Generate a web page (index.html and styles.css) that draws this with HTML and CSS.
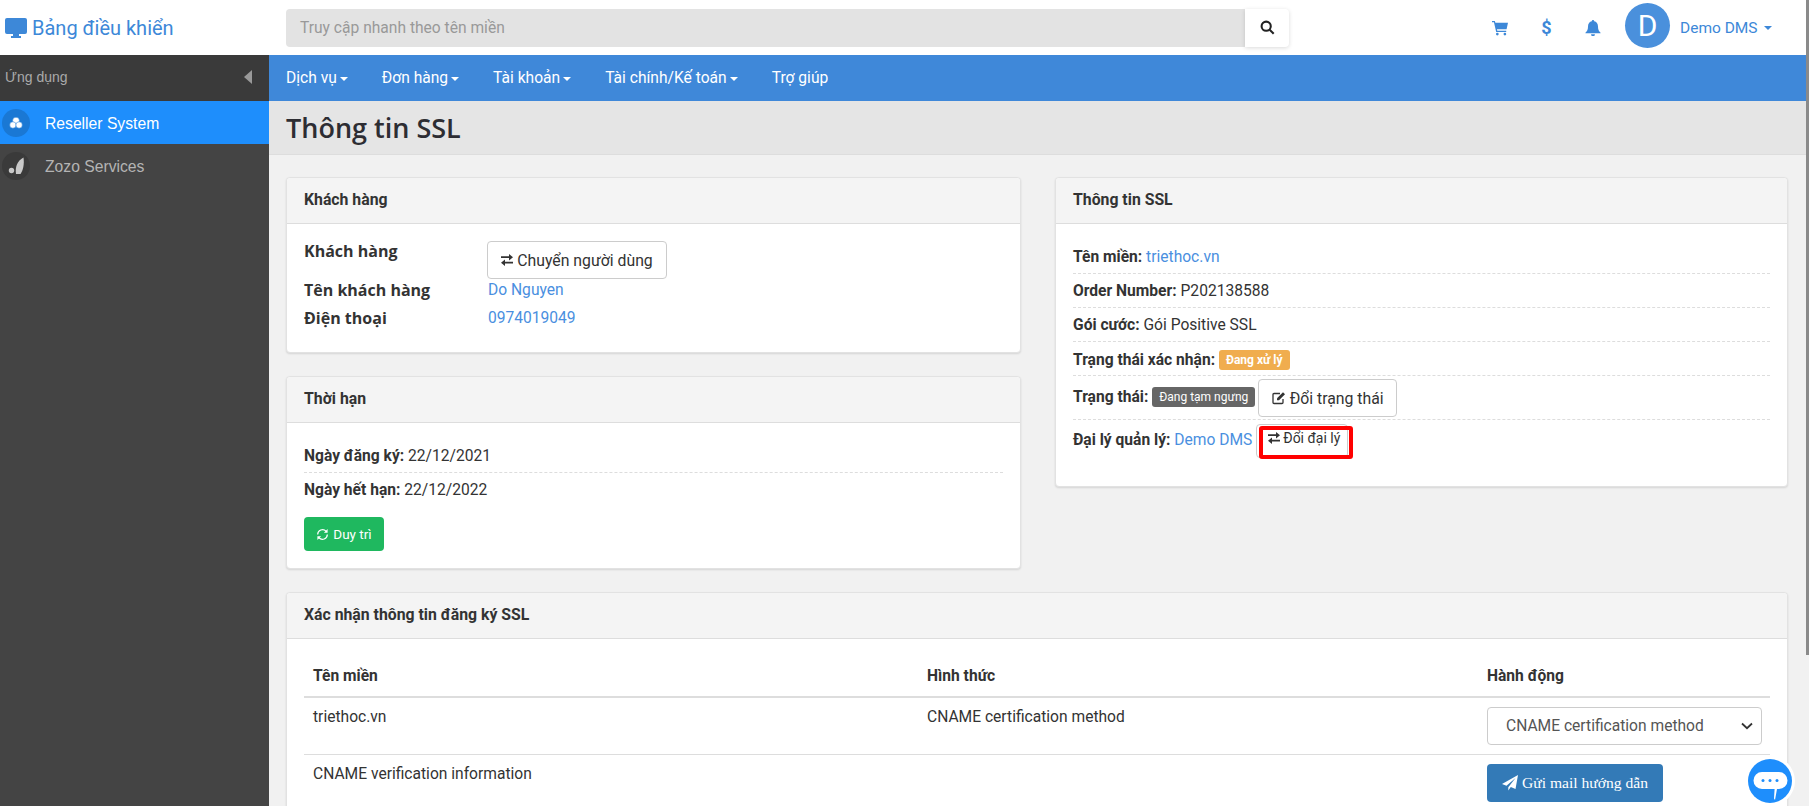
FILE: index.html
```html
<!DOCTYPE html>
<html lang="vi">
<head>
    <meta charset="UTF-8">
    <title>Thông tin SSL</title>
    <link rel="stylesheet" href="styles.css">
</head>
<body>
    <div class="page">
        <!-- Top bar -->
        <header class="topbar">
            <a class="brand">
                <svg class="brand-icon" viewBox="0 0 22 20"><path d="M2 0h18a2 2 0 0 1 2 2v12a2 2 0 0 1-2 2h-6v2h2v2H6v-2h2v-2H2a2 2 0 0 1-2-2V2a2 2 0 0 1 2-2z"/></svg>
                <span>Bảng điều khiển</span>
            </a>
            <div class="search">
                <div class="search-input">Truy cập nhanh theo tên miền</div>
                <div class="search-btn">
                    <svg viewBox="0 0 16 16"><circle cx="6.6" cy="6.6" r="4.9"/><path d="M10.3 10.3 14.6 14.6"/></svg>
                </div>
            </div>
            <div class="top-icons">
                <svg class="top-icon cart" viewBox="0 0 18 18"><path d="M0 1h3.2l.6 2H18l-1.6 7.5H5.6l.3 1.5H16v1.4H4.7L2.2 2.4H0z"/><circle cx="6" cy="15.8" r="1.5"/><circle cx="14.5" cy="15.8" r="1.5"/></svg>
                <span class="dollar">$</span>
                <svg class="top-icon bell" viewBox="0 0 18 18"><path d="M9 0a1.3 1.3 0 0 1 1.3 1.5C13 2 14.600 4.200 14.600 7c0 4 1 5.500 2.900 7.300v.7H.5v-.7C2.400 12.500 3.400 11 3.400 7c0-2.800 1.600-5 4.300-5.500A1.300 1.300 0 0 1 9 0zM6.800 16h4.400a2.200 2.200 0 0 1-4.400 0z"/></svg>
                <div class="avatar">D</div>
                <span class="user">Demo DMS</span>
                <span class="caret user-caret"></span>
            </div>
        </header>

        <div class="body-row">
            <!-- Sidebar -->
            <aside class="sidebar">
                <div class="side-head">
                    <span>Ứng dụng</span>
                    <span class="side-arrow"></span>
                </div>
                <a class="side-item active">
                    <span class="side-circle">
                        <svg class="ic-cloud" viewBox="0 0 14 14"><circle cx="7" cy="4.600" r="3.400"/><circle cx="3.900" cy="9" r="3.200"/><circle cx="10.100" cy="9" r="3.200"/></svg>
                    </span>
                    <span class="side-text">Reseller System</span>
                </a>
                <a class="side-item">
                    <span class="side-circle">
                        <svg class="ic-leaf" viewBox="0 0 18 18"><circle cx="4.500" cy="13.500" r="2.700"/><path d="M9 17C8 10 10 4 16.500 .5c1 7-.5 13-3 16.500z"/></svg>
                    </span>
                    <span class="side-text">Zozo Services</span>
                </a>
            </aside>

            <main class="main">
                <nav class="navbar">
                    <a>Dịch vụ<span class="caret"></span></a>
                    <a>Đơn hàng<span class="caret"></span></a>
                    <a>Tài khoản<span class="caret"></span></a>
                    <a>Tài chính/Kế toán<span class="caret"></span></a>
                    <a>Trợ giúp</a>
                </nav>
                <div class="title-bar"><h1>Thông tin SSL</h1></div>

                <div class="content">
                    <div class="col-grid">
                        <div class="col">
                            <section class="card">
                                <div class="card-head">Khách hàng</div>
                                <div class="card-body customer">
                                    <div class="cust-label">Khách hàng</div>
                                    <div>
                                        <button class="btn btn-user">
                                            <svg class="ic-swap" viewBox="0 0 12 12"><path d="M0 2.300h8V0l4 3.200-4 3.200V4.100H0zM12 7.700H4V5.500L0 8.700l4 3.200V9.500h8z"/></svg>
                                            Chuyển người dùng
                                        </button>
                                    </div>
                                    <div class="cust-label">Tên khách hàng</div>
                                    <div class="link">Do Nguyen</div>
                                    <div class="cust-label">Điện thoại</div>
                                    <div class="link">0974019049</div>
                                </div>
                            </section>

                            <section class="card">
                                <div class="card-head">Thời hạn</div>
                                <div class="card-body">
                                    <div class="info-row first"><b>Ngày đăng ký:</b> 22/12/2021</div>
                                    <div class="info-row last"><b>Ngày hết hạn:</b> 22/12/2022</div>
                                    <button class="btn btn-renew">
                                        <svg class="ic-refresh" viewBox="0 0 14 14"><path d="M1.800 7a5.200 5.200 0 0 1 9-3.500M12.200 7a5.200 5.200 0 0 1-9 3.500"/><path class="tip" d="M12.500 1v4H8.500zM1.500 13V9h4z"/></svg>
                                        Duy trì
                                    </button>
                                </div>
                            </section>
                        </div>

                        <section class="card ssl-card">
                            <div class="card-head">Thông tin SSL</div>
                            <div class="card-body">
                                <div class="info-row first"><b>Tên miền:</b> <span class="link">triethoc.vn</span></div>
                                <div class="info-row"><b>Order Number:</b> P202138588</div>
                                <div class="info-row"><b>Gói cước:</b> Gói Positive SSL</div>
                                <div class="info-row"><b>Trạng thái xác nhận:</b> <span class="badge badge-warn">Đang xử lý</span></div>
                                <div class="info-row status-row">
                                    <b>Trạng thái:</b> <span class="badge badge-dark">Đang tạm ngưng</span>
                                    <button class="btn btn-status">
                                        <svg class="ic-edit" viewBox="0 0 14 14"><path class="frame" d="M11 8v3.500a1 1 0 0 1-1 1H2a1 1 0 0 1-1-1v-8a1 1 0 0 1 1-1h6"/><path class="pen" d="M5 7.200 11 1.200 13 3.200 7 9.200H5z"/></svg>
                                        Đổi trạng thái
                                    </button>
                                </div>
                                <div class="info-row agent-row">
                                    <b>Đại lý quản lý:</b> <span class="link">Demo DMS</span>
                                    <button class="btn btn-agent">
                                        <svg class="ic-swap" viewBox="0 0 12 12"><path d="M0 2.300h8V0l4 3.200-4 3.200V4.100H0zM12 7.700H4V5.500L0 8.700l4 3.200V9.500h8z"/></svg>
                                        Đổi đại lý
                                        <span class="red-mark"></span>
                                    </button>
                                </div>
                            </div>
                        </section>
                    </div>

                    <section class="card">
                        <div class="card-head">Xác nhận thông tin đăng ký SSL</div>
                        <div class="card-body">
                            <table class="verify">
                                <thead>
                                    <tr><th class="c1">Tên miền</th><th class="c2">Hình thức</th><th>Hành động</th></tr>
                                </thead>
                                <tbody>
                                    <tr>
                                        <td>triethoc.vn</td>
                                        <td>CNAME certification method</td>
                                        <td>
                                            <div class="select">
                                                CNAME certification method
                                                <svg viewBox="0 0 12 8"><path d="M1 1.500 6 6.200 11 1.500"/></svg>
                                            </div>
                                        </td>
                                    </tr>
                                    <tr>
                                        <td>CNAME verification information</td>
                                        <td></td>
                                        <td>
                                            <button class="btn btn-mail">
                                                <svg class="ic-plane" viewBox="0 0 16 16"><path d="M16 0 13.500 14 8.800 12 6.300 15.500V12.200L13.500 3 4.500 10.800 0 9z"/></svg>
                                                Gửi mail hướng dẫn
                                            </button>
                                        </td>
                                    </tr>
                                </tbody>
                            </table>
                        </div>
                    </section>
                </div>
            </main>
        </div>
    </div>

    <div class="scrollbar"><div class="scroll-thumb"></div></div>

    <!-- Chat bubble -->
    <div class="chat">
        <svg viewBox="0 0 44 44">
            <circle class="chat-bg" cx="22" cy="22" r="22"/>
            <path class="chat-msg" d="M14 13h17a7.500 7.500 0 0 1 0 17h-2l-2 11-1-1.500 .6-9.500H14a8.500 8.500 0 0 1 0-17z"/>
            <circle class="chat-dot" cx="15" cy="21.500" r="1.500"/>
            <circle class="chat-dot" cx="22" cy="21.500" r="1.500"/>
            <circle class="chat-dot" cx="29" cy="21.500" r="1.500"/>
        </svg>
    </div>
</body>
</html>
```

FILE: styles.css
```css
* {
    box-sizing: border-box;
}

html, body {
    margin: 0;
    height: 100%;
}

body {
    height: 806px;
    overflow: hidden;
    display: flex;
    font-family: Roboto, "Liberation Sans", sans-serif;
    font-size: 15.6px;
    color: #333;
    background-color: #f1f1f1;
}

.page {
    flex: 1;
    min-width: 0;
    display: flex;
    flex-direction: column;
}

.scrollbar {
    width: 3px;
    background-color: #f1f1f1;
}

.scroll-thumb {
    height: 655px;
    background-color: #8a8a8a;
}

/* Top bar */
.topbar {
    height: 55px;
    flex-shrink: 0;
    display: flex;
    align-items: center;
    background-color: #fff;
}

.brand {
    width: 286px;
    padding-left: 5px;
    display: flex;
    align-items: center;
    gap: 5px;
    color: #3d88d8;
    font-size: 20px;
}

.brand-icon {
    width: 22px;
    height: 20px;
    fill: #3d88d8;
}

.search {
    display: flex;
    width: 1003px;
    height: 38px;
}

.search-input {
    flex: 1;
    padding-left: 14px;
    line-height: 38px;
    background-color: #e3e3e3;
    border-radius: 4px 0 0 4px;
    color: #999;
}

.search-btn {
    width: 44px;
    display: flex;
    align-items: center;
    justify-content: center;
    background-color: #fff;
    border-radius: 0 4px 4px 0;
    box-shadow: 0 1px 4px rgba(0, 0, 0, 0.15);
}

.search-btn svg {
    width: 15px;
    height: 15px;
    fill: none;
    stroke: #222;
    stroke-width: 2.2;
}

.top-icons {
    flex: 1;
    display: flex;
    align-items: center;
    padding-left: 203px;
    color: #3d88d8;
}

.top-icon {
    fill: #3d88d8;
}

.cart {
    width: 16px;
    height: 16px;
}

.dollar {
    width: 11px;
    margin-left: 33px;
    font-size: 18px;
    font-weight: 700;
    text-align: center;
}

.bell {
    width: 16px;
    height: 16px;
    margin-left: 33px;
}

.avatar {
    width: 45px;
    height: 45px;
    margin-left: 24px;
    margin-bottom: 4px;
    border-radius: 50%;
    background-color: #4a90dc;
    color: #fff;
    font-size: 30px;
    line-height: 45px;
    text-align: center;
}

.user {
    margin-left: 10px;
    font-size: 15.5px;
}

.caret {
    display: inline-block;
    margin-left: 3px;
    vertical-align: middle;
    border-top: 4px solid currentColor;
    border-left: 4px solid transparent;
    border-right: 4px solid transparent;
}

.user-caret {
    margin-left: 6px;
}

/* Sidebar */
.body-row {
    flex: 1;
    min-height: 0;
    display: flex;
}

.sidebar {
    width: 269px;
    flex-shrink: 0;
    background-color: #444;
    font-family: "Liberation Sans", Arial, sans-serif;
}

.side-head {
    height: 46px;
    padding: 0 17px 2px 5px;
    display: flex;
    align-items: center;
    justify-content: space-between;
    background-color: #3a3a3a;
    color: #aaa;
    font-size: 14px;
}

.side-arrow {
    border-right: 8px solid #999;
    border-top: 7px solid transparent;
    border-bottom: 7px solid transparent;
}

.side-item {
    height: 43px;
    padding-left: 2px;
    display: flex;
    align-items: center;
    gap: 15px;
    color: #b4b4b4;
    font-size: 15.7px;
}

.side-text {
    padding-top: 2px;
}

.side-item.active {
    background-color: #1e8efc;
    color: #fff;
}

.side-circle {
    width: 28px;
    height: 28px;
    display: flex;
    align-items: center;
    justify-content: center;
    border-radius: 50%;
    background-color: #3a3a3a;
}

.side-item.active .side-circle {
    background-color: #1a78d4;
}

.ic-leaf {
    width: 18px;
    height: 18px;
    fill: #c8c8c8;
}

.ic-cloud {
    width: 14px;
    height: 14px;
    fill: #fff;
    stroke: #1a78d4;
    stroke-width: 0.5;
}

/* Main */
.main {
    flex: 1;
    min-width: 0;
}

.navbar {
    height: 46px;
    padding-left: 17px;
    display: flex;
    align-items: center;
    gap: 34px;
    background-color: #3f88d9;
    color: #fff;
}

.title-bar {
    height: 54px;
    padding-left: 17px;
    display: flex;
    align-items: center;
    background-color: #e5e5e5;
    border-bottom: 1px solid #ddd;
}

.title-bar h1 {
    margin: 0;
    font-family: "Open Sans", sans-serif;
    font-size: 27px;
    font-weight: 600;
    color: #2d2d33;
}

.content {
    padding: 22px 18px 0 17px;
    display: flex;
    flex-direction: column;
    gap: 23px;
}

.col-grid {
    display: grid;
    grid-template-columns: 735px 733px;
    gap: 34px;
    align-items: start;
}

.col {
    display: flex;
    flex-direction: column;
    gap: 23px;
}

.card {
    background-color: #fff;
    border: 1px solid #e2e2e2;
    border-radius: 4px;
    box-shadow: 0 1px 2px rgba(0, 0, 0, 0.12);
}

.card-head {
    height: 46px;
    padding-left: 17px;
    line-height: 44px;
    background-color: #f4f4f4;
    border-bottom: 1px solid #ddd;
    border-radius: 4px 4px 0 0;
    font-weight: 700;
    font-size: 15.8px;
}

.card-body {
    padding: 17px;
}

.link {
    color: #4a8fe0;
}

.btn {
    border: 1px solid #ccc;
    border-radius: 4px;
    background-color: #fff;
    font-family: inherit;
    font-size: 15.8px;
    color: #333;
    display: inline-flex;
    align-items: center;
    justify-content: center;
    gap: 4px;
    white-space: nowrap;
}

.ic-swap {
    width: 12px;
    height: 12px;
    fill: #333;
}

/* Customer card */
.customer {
    height: 128px;
    display: grid;
    grid-template-columns: 184px 1fr;
    grid-template-rows: 39px 28px 28px;
    align-items: start;
    line-height: 20px;
}

.cust-label {
    font-family: "Open Sans", sans-serif;
    font-weight: 700;
    font-size: 16px;
}

.btn-user {
    width: 180px;
    height: 38px;
    margin-left: -1px;
}

/* Rows with dashed line */
.info-row {
    padding: 8px 0;
    line-height: 18px;
    border-bottom: 1px dashed #ddd;
    height: 34px;
}

.info-row b {
    font-weight: 700;
}

.info-row.first {
    padding-top: 7px;
    height: 33px;
}

.info-row.last {
    border-bottom: none;
    height: 44px;
}

.btn-renew {
    width: 80px;
    height: 34px;
    border: none;
    background-color: #1fb85f;
    color: #fff;
    font-size: 13.5px;
    display: flex;
}

.ic-refresh {
    width: 13px;
    height: 13px;
    fill: none;
    stroke: #fff;
    stroke-width: 1.3;
}

.ic-refresh .tip {
    fill: #fff;
    stroke: none;
}

/* SSL card */
.ssl-card {
    height: 310px;
}

.badge {
    display: inline-block;
    padding: 0 7px;
    line-height: 20px;
    border-radius: 3px;
    color: #fff;
    font-size: 12px;
    vertical-align: 1px;
}

.badge-warn {
    background-color: #f0ad4e;
    font-weight: 700;
}

.badge-dark {
    background-color: #666;
}

.status-row {
    height: 44px;
    padding: 3px 0 0;
}

.btn-status {
    width: 139px;
    height: 38px;
    margin-left: -1px;
    font-size: 15.8px;
    gap: 4px;
    vertical-align: middle;
}

.ic-edit {
    width: 14px;
    height: 14px;
    fill: none;
    stroke: #333;
    stroke-width: 1.3;
}

.ic-edit .pen {
    fill: #333;
    stroke: none;
}

.agent-row {
    height: 38px;
    padding: 4px 0 0;
    border-bottom: none;
}

.btn-agent {
    position: relative;
    width: 92px;
    height: 34px;
    font-size: 14px;
    vertical-align: middle;
    justify-content: flex-start;
    padding: 0 0 6px 11px;
    gap: 3px;
}

.red-mark {
    position: absolute;
    left: 2px;
    top: 1px;
    width: 94px;
    height: 33px;
    border: 4px solid #f00;
    border-radius: 3px;
}

/* Verify table */
.verify {
    width: 100%;
    table-layout: fixed;
    border-collapse: collapse;
}

.verify th {
    height: 41px;
    padding: 0 9px;
    text-align: left;
    font-weight: 700;
    border-bottom: 2px solid #ddd;
}

.verify .c1 {
    width: 614px;
}

.verify .c2 {
    width: 560px;
}

.verify td {
    height: 57px;
    padding: 10px 9px 8px;
    vertical-align: top;
    border-bottom: 1px solid #ddd;
}

.select {
    width: 275px;
    height: 38px;
    margin-top: -1px;
    padding: 0 8px 0 18px;
    display: flex;
    align-items: center;
    justify-content: space-between;
    border: 1px solid #ccc;
    border-radius: 4px;
    color: #555;
}

.select svg {
    width: 12px;
    height: 8px;
    fill: none;
    stroke: #333;
    stroke-width: 1.8;
}

.btn-mail {
    width: 176px;
    height: 38px;
    margin-top: -1px;
    border: none;
    background-color: #337ab7;
    color: #fff;
    font-family: "Liberation Serif", serif;
    font-size: 15.6px;
}

.ic-plane {
    width: 16px;
    height: 16px;
    fill: #fff;
}

/* Chat bubble */
.chat {
    position: fixed;
    left: 1745px;
    top: 756px;
    width: 50px;
    height: 50px;
    padding: 3px;
    background-color: #fff;
    border-radius: 50%;
}

.chat svg {
    display: block;
    width: 44px;
    height: 44px;
}

.chat-bg {
    fill: #1e8efc;
}

.chat-msg {
    fill: #fff;
}

.chat-dot {
    fill: #1e8efc;
}
```
